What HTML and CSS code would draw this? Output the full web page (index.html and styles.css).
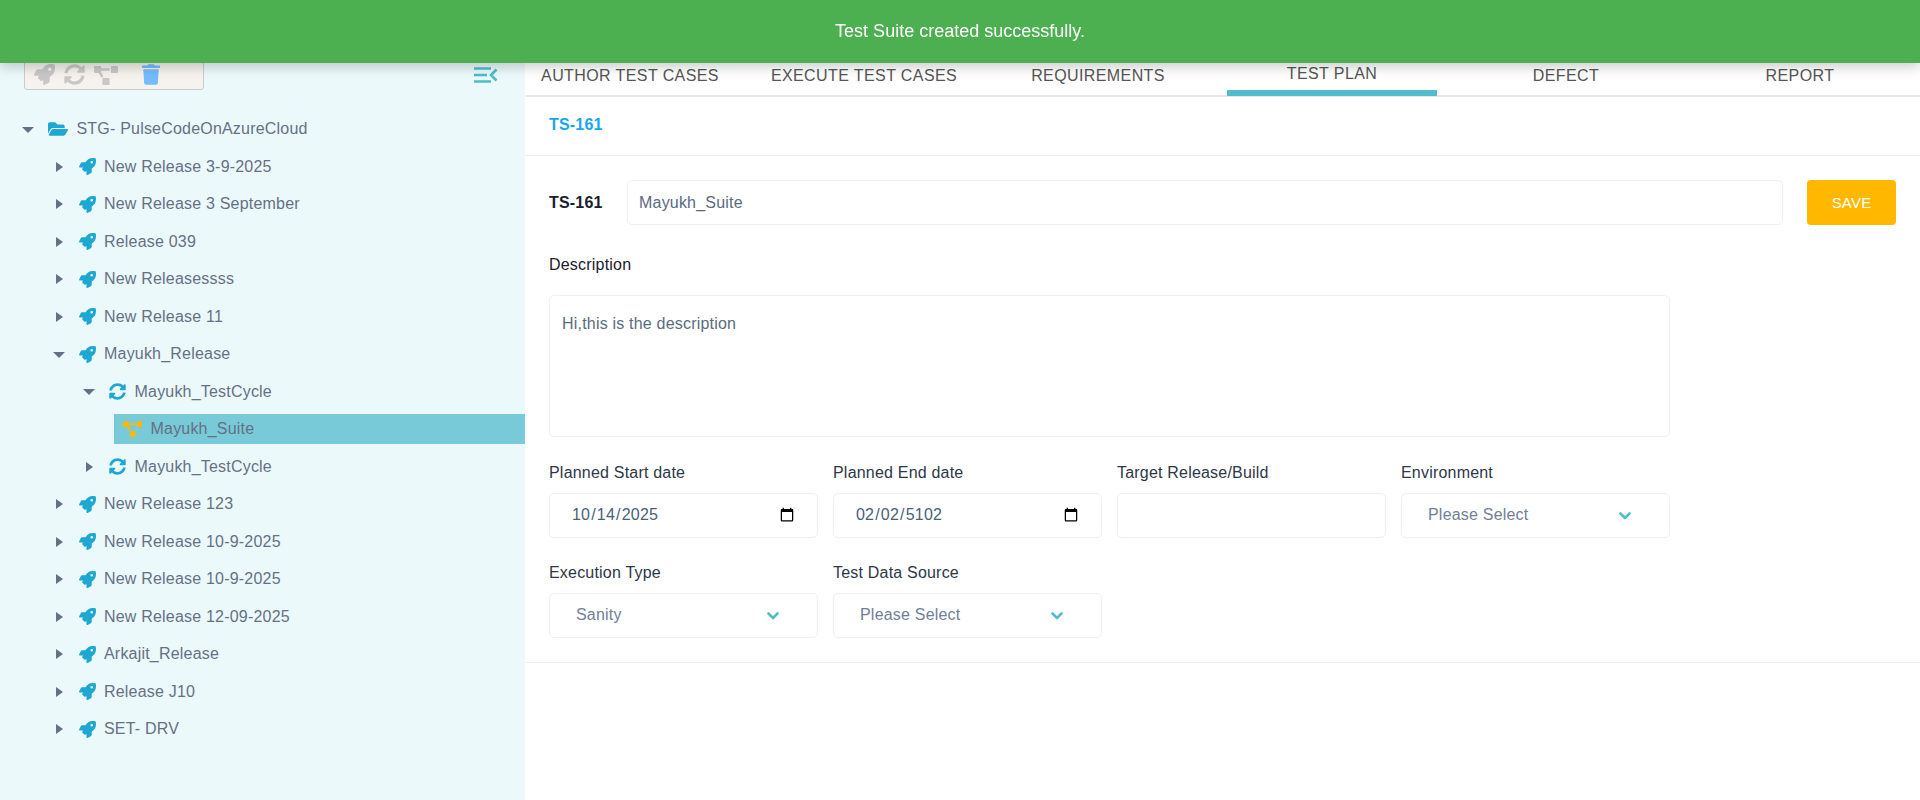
FILE: index.html
```html
<!DOCTYPE html>
<html lang="en">
<head>
    <meta charset="UTF-8">
    <meta name="viewport" content="width=device-width, initial-scale=1.0">
    <title>Test Plan</title>
    <link rel="stylesheet" href="styles.css">
</head>
<body>
    <svg class="icon-defs" xmlns="http://www.w3.org/2000/svg">
        <symbol id="i-rocket" viewBox="0 0 512 512"><path d="M505.12 19.09c-1.19-5.53-6.66-11-12.21-12.19C460.72 0 435.51 0 410.41 0 307.18 0 245.27 55.2 199.05 128H94.84c-16.35.02-35.56 11.88-42.89 26.48L2.52 253.3A28.4 28.4 0 0 0 0 264a24 24 0 0 0 24 24h103.81l-22.47 22.47c-11.37 11.36-13 32.26 0 45.25l50.9 50.91c11.16 11.19 32.16 13.16 45.28 0l22.48-22.47V488a24 24 0 0 0 24 24 28.56 28.56 0 0 0 10.71-2.52l98.73-49.39c14.63-7.3 26.51-26.5 26.51-42.86V312.8c72.6-46.31 128.03-108.41 128.03-211.1.02-25.2.02-50.4-6.93-82.61zM384.04 168a40 40 0 1 1 40.01-40 40.02 40.02 0 0 1-40.01 40z"/></symbol>
        <symbol id="i-sync" viewBox="0 0 512 512"><path d="M370.72 133.28C339.458 104.008 298.888 87.962 255.848 88c-77.458.068-144.328 53.178-162.791 126.85-1.344 5.363-6.122 9.15-11.651 9.15H24.103c-7.498 0-13.194-6.807-11.807-14.176C33.933 94.924 134.813 8 256 8c66.448 0 126.791 26.136 171.315 68.685L463.03 40.97C478.149 25.851 504 36.559 504 57.941V192c0 13.255-10.745 24-24 24H345.941c-21.382 0-32.09-25.851-16.971-40.971l41.75-41.749zM32 296h134.059c21.382 0 32.09 25.851 16.971 40.971l-41.75 41.75c31.262 29.273 71.835 45.319 114.876 45.28 77.418-.07 144.315-53.144 162.787-126.849 1.344-5.363 6.122-9.15 11.651-9.15h57.304c7.498 0 13.194 6.807 11.807 14.176C478.067 417.076 377.187 504 256 504c-66.448 0-126.791-26.136-171.315-68.685L48.97 471.03C33.851 486.149 8 475.441 8 454.059V320c0-13.255 10.745-24 24-24z"/></symbol>
        <symbol id="i-diagram" viewBox="0 0 640 512"><path d="M384 320H256c-17.67 0-32 14.33-32 32v128c0 17.67 14.33 32 32 32h128c17.67 0 32-14.33 32-32V352c0-17.67-14.33-32-32-32zM192 32c0-17.67-14.33-32-32-32H32C14.33 0 0 14.33 0 32v128c0 17.67 14.33 32 32 32h95.72l73.16 128.04c9.97-17.69 28.7-30.04 50.52-30.04h.4L192 161.35V128h224V64H192V32zM608 0H480c-17.67 0-32 14.33-32 32v128c0 17.67 14.33 32 32 32h128c17.67 0 32-14.33 32-32V32c0-17.67-14.33-32-32-32z"/></symbol>
        <symbol id="i-folder" viewBox="0 0 576 512"><path d="M572.694 292.093L500.27 416.248A63.997 63.997 0 0 1 444.989 448H45.025c-18.523 0-30.064-20.093-20.731-36.093l72.424-124.155A64 64 0 0 1 152 256h399.964c18.523 0 30.064 20.093 20.73 36.093zM152 224h328v-48c0-26.51-21.49-48-48-48H272l-64-64H48C21.49 64 0 85.49 0 112v278.046l69.077-118.418C86.214 242.25 117.989 224 152 224z"/></symbol>
        <symbol id="i-trash" viewBox="0 0 448 512"><path d="M432 32H312l-9.4-18.7A24 24 0 0 0 281.1 0H166.8a23.72 23.72 0 0 0-21.4 13.3L136 32H16A16 16 0 0 0 0 48v32a16 16 0 0 0 16 16h416a16 16 0 0 0 16-16V48a16 16 0 0 0-16-16zM53.2 467a48 48 0 0 0 47.9 45h245.8a48 48 0 0 0 47.9-45L416 128H32z"/></symbol>
        <symbol id="i-chevron" viewBox="0 0 12 8"><path d="M1.5 1.5L6 6l4.5-4.5" fill="none" stroke="currentColor" stroke-width="2.6" stroke-linecap="round" stroke-linejoin="round"/></symbol>
    </svg>

    <div class="toast">Test Suite created successfully.</div>

    <div class="layout">
        <aside class="sidebar">
            <div class="sidebar-head">
                <div class="toolbar">
                    <svg class="tool tool-rocket"><use href="#i-rocket"/></svg>
                    <svg class="tool tool-sync"><use href="#i-sync"/></svg>
                    <svg class="tool tool-diagram"><use href="#i-diagram"/></svg>
                    <svg class="tool tool-trash"><use href="#i-trash"/></svg>
                </div>
                <svg class="collapse" viewBox="0 0 24 16">
                    <path d="M0 1.5h17M0 8h13M0 14.5h17" fill="none" stroke="#4dbdcc" stroke-width="2.6"/>
                    <path d="M22.5 2.5L17 8l5.500 5.500" fill="none" stroke="#4dbdcc" stroke-width="2.6"/>
                </svg>
            </div>

            <ul class="tree tree-root">
                <li>
                    <div class="node"><span class="caret open"></span><svg class="node-icon folder"><use href="#i-folder"/></svg><span>STG- PulseCodeOnAzureCloud</span></div>
                    <ul class="tree">
                        <li><div class="node"><span class="caret"></span><svg class="node-icon"><use href="#i-rocket"/></svg><span>New Release 3-9-2025</span></div></li>
                        <li><div class="node"><span class="caret"></span><svg class="node-icon"><use href="#i-rocket"/></svg><span>New Release 3 September</span></div></li>
                        <li><div class="node"><span class="caret"></span><svg class="node-icon"><use href="#i-rocket"/></svg><span>Release 039</span></div></li>
                        <li><div class="node"><span class="caret"></span><svg class="node-icon"><use href="#i-rocket"/></svg><span>New Releasessss</span></div></li>
                        <li><div class="node"><span class="caret"></span><svg class="node-icon"><use href="#i-rocket"/></svg><span>New Release 11</span></div></li>
                        <li>
                            <div class="node"><span class="caret open"></span><svg class="node-icon"><use href="#i-rocket"/></svg><span>Mayukh_Release</span></div>
                            <ul class="tree">
                                <li>
                                    <div class="node"><span class="caret open"></span><svg class="node-icon"><use href="#i-sync"/></svg><span>Mayukh_TestCycle</span></div>
                                    <ul class="tree">
                                        <li><div class="node selected"><svg class="node-icon suite"><use href="#i-diagram"/></svg><span>Mayukh_Suite</span></div></li>
                                    </ul>
                                </li>
                                <li><div class="node"><span class="caret"></span><svg class="node-icon"><use href="#i-sync"/></svg><span>Mayukh_TestCycle</span></div></li>
                            </ul>
                        </li>
                        <li><div class="node"><span class="caret"></span><svg class="node-icon"><use href="#i-rocket"/></svg><span>New Release 123</span></div></li>
                        <li><div class="node"><span class="caret"></span><svg class="node-icon"><use href="#i-rocket"/></svg><span>New Release 10-9-2025</span></div></li>
                        <li><div class="node"><span class="caret"></span><svg class="node-icon"><use href="#i-rocket"/></svg><span>New Release 10-9-2025</span></div></li>
                        <li><div class="node"><span class="caret"></span><svg class="node-icon"><use href="#i-rocket"/></svg><span>New Release 12-09-2025</span></div></li>
                        <li><div class="node"><span class="caret"></span><svg class="node-icon"><use href="#i-rocket"/></svg><span>Arkajit_Release</span></div></li>
                        <li><div class="node"><span class="caret"></span><svg class="node-icon"><use href="#i-rocket"/></svg><span>Release J10</span></div></li>
                        <li><div class="node"><span class="caret"></span><svg class="node-icon"><use href="#i-rocket"/></svg><span>SET- DRV</span></div></li>
                    </ul>
                </li>
            </ul>
        </aside>

        <main class="content">
            <nav class="tabs">
                <a class="tab">AUTHOR TEST CASES</a>
                <a class="tab">EXECUTE TEST CASES</a>
                <a class="tab">REQUIREMENTS</a>
                <a class="tab active">TEST PLAN</a>
                <a class="tab">DEFECT</a>
                <a class="tab">REPORT</a>
            </nav>

            <div class="crumb">TS-161</div>

            <form class="suite-form">
                <div class="name-row">
                    <label class="suite-id" for="suiteName">TS-161</label>
                    <input class="control name-input" type="text" id="suiteName" value="Mayukh_Suite">
                    <button class="save" type="button">SAVE</button>
                </div>

                <label class="desc-label" for="description">Description</label>
                <textarea class="control description" id="description">Hi,this is the description</textarea>

                <div class="field-grid">
                    <div class="field">
                        <label for="startDate">Planned Start date</label>
                        <input class="control date" type="date" id="startDate" value="2025-10-14">
                    </div>
                    <div class="field">
                        <label for="endDate">Planned End date</label>
                        <input class="control date" type="date" id="endDate" value="5102-02-02">
                    </div>
                    <div class="field">
                        <label for="target">Target Release/Build</label>
                        <input class="control" type="text" id="target">
                    </div>
                    <div class="field">
                        <label>Environment</label>
                        <div class="control select"><span>Please Select</span><svg class="chevron"><use href="#i-chevron"/></svg></div>
                    </div>
                    <div class="field">
                        <label>Execution Type</label>
                        <div class="control select"><span>Sanity</span><svg class="chevron"><use href="#i-chevron"/></svg></div>
                    </div>
                    <div class="field">
                        <label>Test Data Source</label>
                        <div class="control select"><span>Please Select</span><svg class="chevron"><use href="#i-chevron"/></svg></div>
                    </div>
                </div>
            </form>
        </main>
    </div>
</body>
</html>
```

FILE: styles.css
```css
* {
    box-sizing: border-box;
}
html, body {
    height: 100%;
}
body {
    margin: 0;
    font-family: "Liberation Sans", Arial, sans-serif;
    font-size: 16px;
    letter-spacing: 0.2px;
    color: #2d3748;
    background-color: #fff;
    overflow: hidden;
}
ul {
    list-style: none;
    margin: 0;
    padding: 0;
}
.icon-defs {
    display: none;
}

/* toast */
.toast {
    position: fixed;
    top: 0;
    left: 0;
    right: 0;
    z-index: 10;
    height: 63px;
    display: flex;
    align-items: center;
    justify-content: center;
    background-color: #4caf50;
    color: #fff;
    font-size: 18px;
    letter-spacing: 0;
    box-shadow: 0 4px 12px rgba(0, 0, 0, 0.2);
}

.layout {
    display: flex;
    height: 100%;
}

/* sidebar */
.sidebar {
    width: 525px;
    flex-shrink: 0;
    background-color: #ebf9fa;
}
.sidebar-head {
    display: flex;
    justify-content: space-between;
    padding: 50px 27px 0 24px;
}
.toolbar {
    width: 180px;
    height: 40px;
    display: flex;
    padding: 13px 0 0 9px;
    background-color: #f6f2ee;
    border: 1px solid #cccccc;
    border-radius: 3px;
}
.tool {
    height: 21px;
    fill: #c8c8c8;
}
.tool-rocket {
    width: 21px;
}
.tool-sync {
    width: 21px;
    margin-left: 9px;
}
.tool-diagram {
    width: 24px;
    margin: 1px 0 0 9px;
}
.tool-trash {
    width: 18px;
    margin-left: 24px;
    fill: #74bbff;
}
.collapse {
    width: 24px;
    height: 16px;
    margin-top: 17px;
}

/* tree */
.tree-root {
    margin-top: 24px;
    padding-left: 22px;
}
.tree {
    display: flex;
    flex-direction: column;
    gap: 7.5px;
}
.tree .tree {
    margin-top: 7.5px;
    padding-left: 30.5px;
}
.node {
    height: 30px;
    display: flex;
    align-items: center;
    color: #667085;
    white-space: nowrap;
}
.node.selected {
    padding-left: 9px;
    background-color: #78cad8;
}
.caret {
    width: 12px;
    height: 12px;
    margin-right: 14px;
    flex-shrink: 0;
    position: relative;
}
.caret::before {
    content: "";
    position: absolute;
    top: 1px;
    left: 3px;
    border-style: solid;
    border-width: 5.5px 0 5.500px 7px;
    border-color: transparent transparent transparent #667085;
}
.caret.open::before {
    top: 3.5px;
    left: 0;
    border-width: 6.5px 6px 0 6px;
    border-color: #667085 transparent transparent transparent;
}
.node-icon {
    width: 17px;
    height: 17px;
    margin-right: 8.5px;
    flex-shrink: 0;
    fill: #1da8d4;
}
.node-icon.folder {
    width: 20px;
    height: 18px;
}
.node-icon.suite {
    width: 19.5px;
    height: 16px;
    fill: #ffb700;
}

/* main */
.content {
    flex: 1;
    min-width: 0;
}
.tabs {
    height: 97px;
    padding-top: 64px;
    display: flex;
    gap: 24px;
    border-bottom: 2px solid #e5e9ec;
}
.tab {
    width: 210px;
    height: 32px;
    line-height: 24px;
    text-align: center;
    letter-spacing: 0.4px;
    color: #555;
}
.tab.active {
    line-height: 20px;
    border-bottom: 6px solid #4fbdcc;
}
.crumb {
    height: 59px;
    padding: 0 0 3px 24px;
    display: flex;
    align-items: center;
    font-weight: bold;
    color: #17a8ea;
    border-bottom: 1px solid #eeeeee;
}
.suite-form {
    padding: 24px 24px 24px;
    border-bottom: 1px solid #eeeeee;
}
.name-row {
    display: flex;
    align-items: center;
}
.suite-id {
    width: 78px;
    font-weight: bold;
    color: #1a202c;
}
.control {
    height: 45px;
    padding: 0 11px;
    border: 1px solid #edf0f5;
    border-radius: 5px;
    background-color: #fff;
    font-family: inherit;
    font-size: 16px;
    letter-spacing: inherit;
    color: #5a6b80;
    outline: none;
}
.name-input {
    flex: 1;
    min-width: 0;
}
.save {
    width: 89px;
    height: 45px;
    margin-left: 24px;
    border: none;
    border-radius: 4px;
    background-color: #ffb700;
    color: #fff;
    font-family: inherit;
    font-size: 15px;
    letter-spacing: inherit;
}
.desc-label {
    display: block;
    margin-top: 28px;
    line-height: 24px;
    color: #1a202c;
}
.description {
    display: block;
    width: 1121px;
    height: 142px;
    margin-top: 18px;
    padding: 16px 12px;
    line-height: 24px;
    resize: none;
}
.field-grid {
    width: 1121px;
    margin-top: 24px;
    display: grid;
    grid-template-columns: repeat(4, 269px);
    column-gap: 15px;
    row-gap: 23px;
}
.field {
    display: flex;
    flex-direction: column;
    gap: 8px;
}
.field label {
    line-height: 24px;
}
.date {
    padding: 0 20px 2px 21px;
    color: #4a5f7a;
}
.select {
    display: flex;
    align-items: center;
    justify-content: space-between;
    padding: 0 38px 2px 26px;
    color: #718096;
}
.chevron {
    width: 12px;
    height: 8px;
    margin-top: 2px;
    color: #4fbdcc;
}
```
